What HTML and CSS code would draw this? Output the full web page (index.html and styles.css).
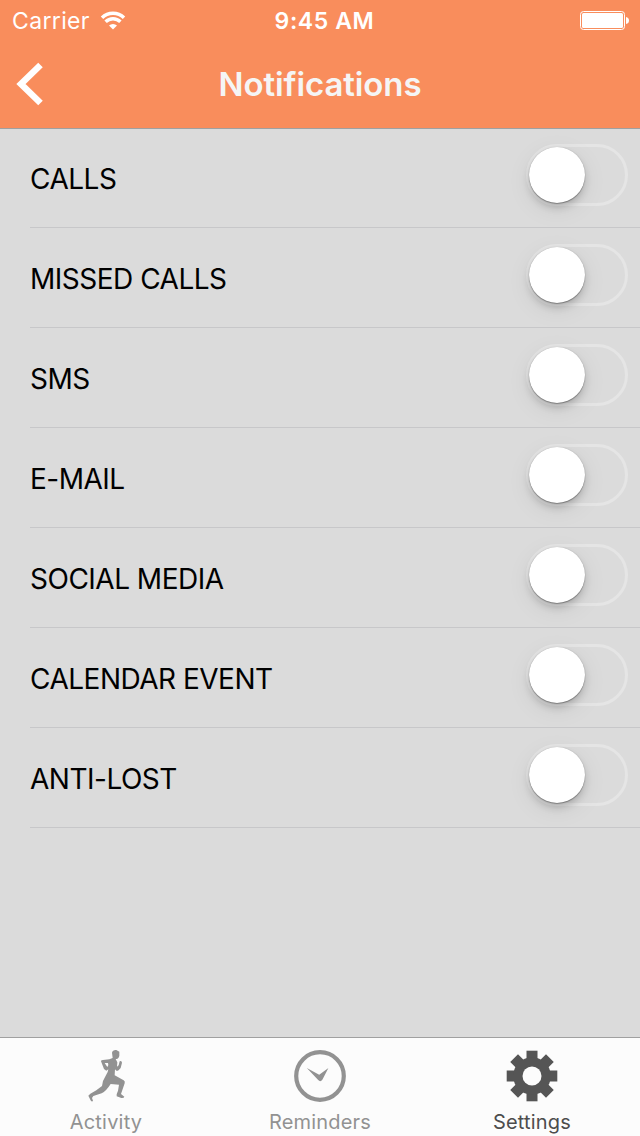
FILE: index.html
```html
<!DOCTYPE html>
<html lang="en">

<head>
    <meta charset="UTF-8">
    <meta name="viewport" content="width=device-width, initial-scale=1.0">
    <link rel="stylesheet" href="styles.css">
    <title>Notifications</title>
</head>

<body>
    <header class="header">
        <div class="status-bar">
            <div class="carrier">
                <span>Carrier</span>
                <svg class="wifi" width="26" height="20" viewBox="0 0 26 20">
                    <path d="M2 6.8 A15.5 15.5 0 0 1 24 6.8" />
                    <path d="M5.6 10.8 A10.4 10.4 0 0 1 20.4 10.8" />
                    <path class="dot" d="M9 14.6 A5.6 5.6 0 0 1 17 14.6 L13 18.6 Z" />
                </svg>
            </div>
            <span class="time">9:45 AM</span>
            <div class="battery">
                <svg width="50" height="20" viewBox="0 0 50 20">
                    <rect x="0.5" y="0.5" width="44" height="18" rx="3" fill="none" stroke="#fff" />
                    <rect x="2" y="2" width="41" height="15" rx="1.5" fill="#fff" />
                    <path d="M46 6 Q49 6.5 49 9.5 Q49 12.5 46 13 Z" fill="#fff" />
                </svg>
            </div>
        </div>
        <div class="nav-bar">
            <a href="#" class="back">
                <svg width="28" height="44" viewBox="0 0 28 44">
                    <path d="M24.5 3 L5 22 L24.5 41" />
                </svg>
            </a>
            <h1>Notifications</h1>
        </div>
    </header>

    <ul class="list">
        <li class="row"><span class="label">CALLS</span><span class="switch"></span></li>
        <li class="row"><span class="label">MISSED CALLS</span><span class="switch"></span></li>
        <li class="row"><span class="label">SMS</span><span class="switch"></span></li>
        <li class="row"><span class="label">E-MAIL</span><span class="switch"></span></li>
        <li class="row"><span class="label">SOCIAL MEDIA</span><span class="switch"></span></li>
        <li class="row"><span class="label">CALENDAR EVENT</span><span class="switch"></span></li>
        <li class="row"><span class="label">ANTI-LOST</span><span class="switch"></span></li>
    </ul>

    <nav class="tab-bar">
        <a href="#" class="tab">
            <svg width="40" height="56" viewBox="77 54 120 168">
                <path d="M155 68 Q157 59 168 60 L177 65 L177 77 Q175 87 166 87 L171 97 L170 110 L175 106 L178 94 Q184 91 185 98 L181 114 L173 122 L168 122 L164 118 L163 136 L190 151 Q195 154 193 160 L182 192 L192 200 Q191 205 183 204 L169 199 L169 193 L173 182 L176 164 L151 162 Q137 184 124 190 L99 198 L95 204 L98 212 Q96 216 92 213 L84 197 L90 191 L108 181 L125 168 Q126 152 133 143 L142 126 L144 118 L138 122 L131 117 L122 94 Q122 90 128 90 L147 88 L157 84 Z M133 99 L141 111 L144 105 L143 99 Z" fill="#929292" fill-rule="evenodd" />
            </svg>
            <span>Activity</span>
        </a>
        <a href="#" class="tab">
            <svg width="56" height="56" viewBox="0 0 56 56">
                <circle cx="28" cy="28" r="23.8" fill="none" stroke="#929292" stroke-width="4.2" />
                <path d="M14.8 20 L27.2 26.8 L36.4 20 L30.5 31.5 Q28.4 34.5 26.2 32 Z" fill="#929292" />
            </svg>
            <span>Reminders</span>
        </a>
        <a href="#" class="tab active">
            <svg width="56" height="56" viewBox="-28 -28 56 56">
                <g fill="#555">
                    <rect x="-5.5" y="-25.3" width="11" height="50.6" />
                    <rect x="-5.5" y="-25.3" width="11" height="50.6" transform="rotate(45)" />
                    <rect x="-5.5" y="-25.3" width="11" height="50.6" transform="rotate(90)" />
                    <rect x="-5.5" y="-25.3" width="11" height="50.6" transform="rotate(135)" />
                    <circle r="18.8" />
                </g>
                <circle r="9.5" fill="#fcfcfc" />
            </svg>
            <span>Settings</span>
        </a>
    </nav>
</body>

</html>
```

FILE: styles.css
```css
* {
    box-sizing: border-box;
}

body {
    display: flex;
    flex-direction: column;
    height: 1136px;
    margin: 0;
    font-family: Inter, "Liberation Sans", sans-serif;
    background-color: #dbdbdb;
    color: #000;
}

a {
    color: inherit;
    text-decoration: none;
}

.header {
    height: 128px;
    background-color: #f98d5c;
    box-shadow: 0 1px 0 #a0a0a0;
    color: white;
}

.status-bar {
    display: grid;
    grid-template-columns: 1fr auto 1fr;
    align-items: center;
    height: 40px;
    padding: 1px 10px 0 12px;
    font-size: 23px;
    line-height: 40px;
}

.carrier {
    display: flex;
    align-items: center;
    gap: 10px;
    letter-spacing: 0.35px;
}

.wifi path {
    fill: none;
    stroke: white;
    stroke-width: 3.4;
}

.wifi .dot {
    fill: white;
    stroke: none;
}

.time {
    padding-left: 7px;
    font-weight: 600;
    letter-spacing: 0.6px;
}

.battery {
    display: flex;
    justify-content: flex-end;
}

.nav-bar {
    display: grid;
    grid-template-columns: 60px 1fr 60px;
    align-items: center;
    height: 88px;
}

.back {
    display: flex;
    padding-left: 16px;
}

.back path {
    fill: none;
    stroke: white;
    stroke-width: 6.5;
}

h1 {
    margin: 0;
    font-size: 33px;
    font-weight: 600;
    line-height: 88px;
    letter-spacing: -0.1px;
    text-align: center;
    color: #f5f5f5;
}

.list {
    flex: 1;
    margin: 0;
    padding: 0 0 0 30px;
    list-style: none;
}

.row {
    display: flex;
    justify-content: space-between;
    height: 100px;
    padding: 16px 12px 0 0;
    border-bottom: 1px solid #c7c7c9;
}

.label {
    font-size: 28px;
    line-height: 70px;
    letter-spacing: -0.5px;
}

.switch {
    width: 102px;
    height: 62px;
    border: 3px solid #e5e5e5;
    border-radius: 31px;
}

.switch::before {
    content: "";
    display: block;
    width: 56px;
    height: 56px;
    border-radius: 50%;
    background-color: white;
    box-shadow: 0 0 1px rgba(0, 0, 0, 0.25), 0 1px 1px rgba(0, 0, 0, 0.3), 0 5px 7px rgba(0, 0, 0, 0.17), 0 6px 24px rgba(0, 0, 0, 0.08);
}

.tab-bar {
    display: grid;
    grid-template-columns: 212px 216px 208px;
    height: 99px;
    border-top: 1px solid #a0a0a0;
    background-color: #fcfcfc;
}

.tab {
    display: flex;
    flex-direction: column;
    align-items: center;
    gap: 6px;
    padding-top: 10px;
    font-size: 20px;
    line-height: 24px;
    letter-spacing: 0.2px;
    color: #929292;
}

.tab svg {
    flex-shrink: 0;
}

.active {
    color: #4d4d4d;
}
```
